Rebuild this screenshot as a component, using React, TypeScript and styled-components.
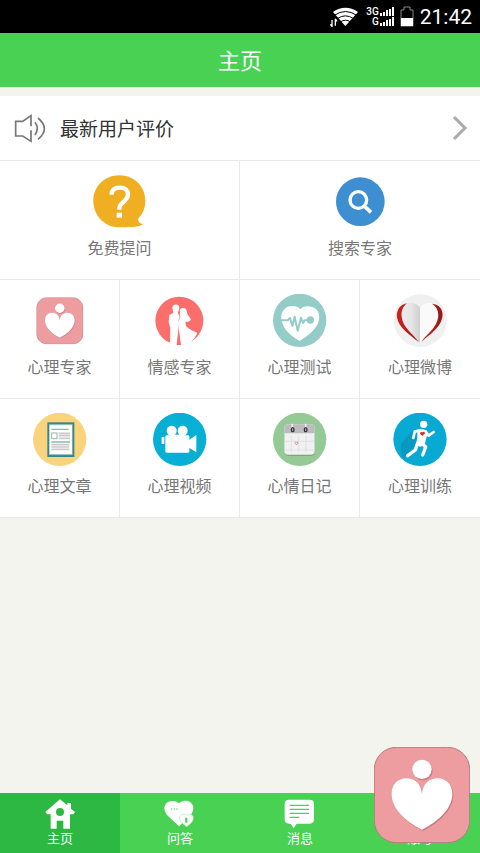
import React from "react";
import styled, { createGlobalStyle } from "styled-components";

const GlobalStyle = createGlobalStyle`
  * { box-sizing: border-box; }
  body {
    margin: 0;
    background: #f4f4ee;
    font-family: Roboto, "Noto Sans CJK SC", sans-serif;
  }
  button { font: inherit; border: 0; padding: 0; cursor: pointer; }
  svg { display: block; flex: none; }
`;

const Page = styled.div`
  min-height: 100vh;
  display: flex;
  flex-direction: column;
`;

const StatusBar = styled.div`
  height: 33px;
  padding: 0 8px;
  display: flex;
  align-items: center;
  justify-content: flex-end;
  gap: 6px;
  background: #000;
  color: #fff;
`;

const SignalGroup = styled.div`
  display: flex;
  flex-direction: column;
`;

const SignalLine = styled.div`
  display: flex;
  align-items: center;
  justify-content: flex-end;
  gap: 1px;
  height: 10px;
  font-size: 10px;
  line-height: 10px;
  font-weight: 500;
`;

const Clock = styled.time`
  padding-top: 2px;
  font-size: 21px;
  line-height: 31px;
`;

const Header = styled.header`
  height: 54px;
  padding-top: 3px;
  display: flex;
  align-items: center;
  justify-content: center;
  background: #49d154;
  color: #fff;
`;

const Title = styled.h1`
  margin: 0;
  font-size: 22px;
  line-height: 32px;
  font-weight: 400;
`;

const Main = styled.main`
  flex: 1;
  padding-top: 9px;
`;

const ReviewRow = styled.button`
  width: 100%;
  height: 65px;
  padding: 0 12px 0 14px;
  display: flex;
  align-items: center;
  gap: 14px;
  background: #fff;
  border-bottom: 1px solid #e9e9e9;
  color: #333;
  text-align: left;
`;

const ReviewText = styled.span`
  flex: 1;
  padding-top: 3px;
  font-size: 19px;
  line-height: 28px;
`;

const Grid = styled.div<{ $columns: number }>`
  display: grid;
  grid-template-columns: repeat(${(p) => p.$columns}, 1fr);
`;

const Cell = styled.button`
  height: 119px;
  padding-top: 14px;
  display: flex;
  flex-direction: column;
  align-items: center;
  gap: 8px;
  background: #fff;
  border-right: 1px solid #e9e9e9;
  border-bottom: 1px solid #e9e9e9;
  color: #777;
  font-size: 16px;
  line-height: 24px;

  ${Grid} > &:last-child {
    border-right: 0;
  }
`;

const TabBar = styled.nav`
  position: sticky;
  bottom: 0;
  display: grid;
  grid-template-columns: repeat(4, 1fr);
  background: #49d154;
`;

const Tab = styled.button<{ $active?: boolean }>`
  height: 60px;
  padding-top: 5px;
  display: flex;
  flex-direction: column;
  align-items: center;
  gap: 1px;
  background: ${(p) => (p.$active ? "#2db843" : "transparent")};
  color: #fff;
  font-size: 13px;
  line-height: 16px;
`;

const FloatingButton = styled.button`
  position: fixed;
  right: 10px;
  bottom: 10px;
  background: none;
  border-radius: 24px;
`;

const CellSvg = ({ box, children }: { box: string; children: React.ReactNode }) => (
  <svg width="54" height="54" viewBox={`${box} 162 162`} aria-hidden="true">
    {children}
  </svg>
);

const TabSvg = ({ box, children }: { box: string; children: React.ReactNode }) => (
  <svg width="32" height="32" viewBox={`${box} 96 96`} fill="#fff" aria-hidden="true">
    {children}
  </svg>
);

const LogoShape = () => (
  <>
    <rect x="1" y="1" width="286" height="286" rx="66" fill="#ed9ca0" stroke="#b77b80" strokeWidth="3" />
    <g fill="#c87c82" transform="translate(3 4)">
      <circle cx="144" cy="67" r="29" />
      <path d="M144 143C143 110 121 94 97 94C71 94 53 113 53 141C53 183 91 222 144 248C196 222 235 183 235 141C235 113 216 94 191 94C167 94 145 110 144 143Z" />
    </g>
    <g fill="#fff">
      <circle cx="144" cy="67" r="29" />
      <path d="M144 143C143 110 121 94 97 94C71 94 53 113 53 141C53 183 91 222 144 248C196 222 235 183 235 141C235 113 216 94 191 94C167 94 145 110 144 143Z" />
    </g>
  </>
);

const QuestionIcon = () => (
  <CellSvg box="38 29">
    <path d="M117 30C161 30 195 63 195 107C195 130 186 148 173 160C173 169 178 174 188 177C177 184 160 186 145 184C136 186 127 186 117 186C73 186 39 151 39 107C39 63 73 30 117 30Z" fill="#f0af22" />
    <path d="M94 88C94 73 104 67 119 67C134 67 143 75 143 87C143 98 137 103 129 110C119 118 117 122 117 133" fill="none" stroke="#fff" strokeWidth="13" />
    <rect x="109" y="142" width="16" height="15" fill="#fff" />
  </CellSvg>
);

const SearchIcon = () => (
  <CellSvg box="39 29">
    <circle cx="121" cy="109" r="73" fill="#3d8fd1" />
    <circle cx="115" cy="104" r="25" fill="none" stroke="#fff" strokeWidth="10" />
    <path d="M134 123L153 141" stroke="#fff" strokeWidth="11" />
  </CellSvg>
);

const ExpertIcon = () => (
  <CellSvg box="98 41">
    <svg x="108" y="51" width="141" height="141" viewBox="0 0 288 288">
      <LogoShape />
    </svg>
  </CellSvg>
);

const CoupleIcon = () => (
  <CellSvg box="98 41">
    <circle cx="177" cy="121" r="72" fill="#fb6e6b" />
    <g fill="#fff">
      <path d="M156 82C157 73 167 70 174 75C178 79 177 87 174 93L173 98L178 110L177 127L173 144L172 194L149 190L150 142L145 126L147 104L159 98Z" />
      <path d="M179 95C176 87 182 82 190 83C198 84 200 92 201 101C205 108 211 113 212 119L204 124L195 124L197 137C207 147 218 152 231 157C225 171 218 182 205 189L184 193L173 192L174 145L174 124L177 107Z" />
    </g>
    <path d="M176 97L179 111L174 121" stroke="#fb6e6b" strokeWidth="2" fill="none" />
    <path d="M175 142L169 194L182 194Z" fill="#fb6e6b" />
  </CellSvg>
);

const PulseIcon = () => (
  <CellSvg box="98 41">
    <circle cx="178" cy="120" r="80" fill="#94ccc8" />
    <path d="M180 87C171 75 152 75 139 81C126 89 120 104 124 121C130 149 152 166 178 182C205 165 230 146 236 119C240 99 231 85 216 80C201 76 187 77 180 87Z" fill="#fff" />
    <path d="M121 120H142L149 113L156 137L163 109L172 151L182 112L188 128L193 120H210" fill="none" stroke="#94ccc8" strokeWidth="6" strokeLinejoin="round" />
    <circle cx="210" cy="119" r="11" fill="#94ccc8" />
  </CellSvg>
);

const PaperHeartIcon = () => (
  <CellSvg box="99 41">
    <defs>
      <linearGradient id="fold" x1="0" x2="1">
        <stop offset="0" stopColor="#eee" />
        <stop offset="0.6" stopColor="#e5e5e5" />
        <stop offset="1" stopColor="#cfcfcf" />
      </linearGradient>
      <linearGradient id="ribbon" x1="0" x2="1">
        <stop offset="0" stopColor="#d2221c" />
        <stop offset="1" stopColor="#901916" />
      </linearGradient>
    </defs>
    <circle cx="181" cy="121" r="79" fill="#f0f0f0" />
    <path d="M180 188V82C170 66 147 66 134 72C118 81 112 96 116 112C124 142 153 163 180 188Z" fill="url(#fold)" />
    <path d="M180 188V82C190 66 213 66 226 72C242 81 247 96 244 112C236 144 207 164 180 188Z" fill="#fafafa" />
    <path d="M141 69C119 72 108 92 111 112C117 143 151 164 176 185C157 159 128 140 125 110C123 93 128 79 141 69Z" fill="url(#ribbon)" />
    <path d="M216 70C240 72 251 90 247 111C241 145 207 163 184 185C199 161 229 145 234 113C237 96 231 79 216 70Z" fill="url(#ribbon)" />
  </CellSvg>
);

const ArticleIcon = () => (
  <CellSvg box="98 40">
    <circle cx="178" cy="119" r="80" fill="#fad47d" />
    <rect x="144" y="71" width="75" height="98" fill="#fff" stroke="#36858a" strokeWidth="6" />
    <path d="M147 75H216M147 165H216" stroke="#7fb8b8" strokeWidth="3" />
    <path d="M153 89H205M153 127H209" stroke="#8db9ad" strokeWidth="4" />
    <rect x="154" y="100" width="16" height="17" fill="#fff" stroke="#8db9ad" strokeWidth="3" />
    <path d="M175 101H209M175 108H209M175 116H209M153 135H207M153 142H207M153 149H207" stroke="#cdc9cb" strokeWidth="5" />
  </CellSvg>
);

const VideoIcon = () => (
  <CellSvg box="458 40">
    <circle cx="538" cy="119" r="80" fill="#06afd3" />
    <g fill="#fff">
      <circle cx="514" cy="93" r="15" />
      <circle cx="547" cy="93" r="15" />
      <rect x="495" y="107" width="72" height="52" rx="4" />
      <path d="M484 112H492V133H484ZM566 121L588 106V158L566 144Z" />
      <path d="M510 105H550V111H510Z" />
    </g>
  </CellSvg>
);

const CalendarIcon = () => (
  <CellSvg box="98 40">
    <circle cx="178" cy="119" r="80" fill="#95ca96" />
    <rect x="133" y="77" width="90" height="91" rx="11" fill="#6f9d75" />
    <rect x="132" y="74" width="91" height="91" rx="11" fill="#f1f1f1" />
    <path d="M132 101V85Q132 74 143 74H212Q223 74 223 85V101Z" fill="#bdbbc0" />
    <path d="M133 125H222M133 151H222M153 108V158M175 108V158M197 108V158" stroke="#d9d9d9" strokeWidth="2" />
    <path d="M156 72V86M196 72V86" stroke="#f7f7f7" strokeWidth="4" />
    <g fill="#aaa" stroke="#38373d" strokeWidth="4">
      <ellipse cx="157" cy="90" rx="4" ry="6" />
      <ellipse cx="196" cy="90" rx="4" ry="6" />
    </g>
    <path d="M168 135L164 131Q164 126 168 128Q173 125 173 131Z" fill="none" stroke="#e88a87" strokeWidth="3" />
  </CellSvg>
);

const RunnerIcon = () => (
  <CellSvg box="459 40">
    <circle cx="540" cy="119" r="80" fill="#08a9d3" />
    <path d="M518 93L484 131Q478 155 490 176L500 165L526 137L530 98Z" fill="#0799c1" />
    <circle cx="551" cy="74" r="11" fill="#fff" />
    <g fill="none" stroke="#fff" strokeLinecap="round" strokeLinejoin="round">
      <path d="M540 92L524 96L520 115M557 96L566 108L581 97" strokeWidth="8" />
      <path d="M532 133L526 151L503 168M545 130L557 142L548 166" strokeWidth="10" />
    </g>
    <path d="M532 90Q547 86 561 93L561 108L554 134L541 141L527 136L532 116Z" fill="#fff" />
    <path d="M547 109L540 102Q540 94 547 98Q554 94 555 101Z" fill="#df2d2d" />
  </CellSvg>
);

const HomeIcon = () => (
  <TabSvg box="132 40">
    <path fillRule="evenodd" d="M180 44L202 62V55H213V72L225 82L220 89H210V132H190V108H170V132H152V89H141L136 82ZM180 70A12 12 0 1 0 180 94A12 12 0 1 0 180 70Z" />
    <path d="M170 99H190V105H170Z" />
  </TabSvg>
);

const AnswerIcon = () => (
  <TabSvg box="493 39">
    <path d="M538 55C528 45 509 46 500 55C490 66 494 80 504 92L538 124L572 91C583 78 584 63 574 53C563 45 547 46 538 55Z" />
    <g fill="#49d154">
      <circle cx="516" cy="72" r="2" />
      <circle cx="524" cy="72" r="2" />
      <circle cx="532" cy="72" r="2" />
    </g>
    <path d="M561 91C551 84 540 88 540 99C540 110 551 117 561 125C571 117 581 110 581 99C581 88 570 84 561 91Z" stroke="#a6e8aa" strokeWidth="2" />
    <path d="M555 101L559 98H563V113H557V103Z" fill="#49d154" />
  </TabSvg>
);

const MessageIcon = () => (
  <TabSvg box="132 189">
    <path d="M147 194H209Q222 194 222 207V253Q222 266 209 266H170L161 280L152 266H147Q134 266 134 253V207Q134 194 147 194Z" />
    <path d="M149 211H207M149 223H207M149 235H207M149 247H178" stroke="#49d154" strokeWidth="4" />
  </TabSvg>
);

const AccountIcon = () => (
  <TabSvg box="0 0">
    <circle cx="48" cy="27" r="21" />
    <path d="M10 91V76Q10 54 33 54H63Q86 54 86 76V91Z" />
  </TabSvg>
);

const SpeakerIcon = () => (
  <svg width="32" height="32" viewBox="42 96 96 96" fill="none" stroke="#777" strokeWidth="5" aria-hidden="true">
    <path d="M93 151V184L68 168H47V124H68L93 107V139" />
    <path d="M105 127Q119 145 105 165M114 114Q152 146 114 178" />
  </svg>
);

const ChevronIcon = () => (
  <svg width="16" height="26" viewBox="0 0 16 26" fill="none" stroke="#aaa" strokeWidth="3" aria-hidden="true">
    <path d="M2 2L13 13L2 24" />
  </svg>
);

const WifiIcon = () => (
  <svg width="30" height="20" viewBox="27 22 90 60" aria-hidden="true">
    <path d="M36 37Q73 12 111 37L73 79Z" fill="#fff" />
    <path d="M40 47Q73 24 107 47M49 57Q73 40 98 57M58 67Q73 56 89 67" fill="none" stroke="#000" strokeWidth="3" />
    <path d="M27 54H51V82H27Z" fill="#000" />
    <path d="M33 82V61M28 74L33 80M43 57V78M43 58L48 65" stroke="#fff" strokeWidth="4" fill="none" />
  </svg>
);

const SignalBars = () => (
  <svg width="14" height="9" viewBox="0 0 14 9" fill="#fff" aria-hidden="true">
    <path d="M0 6H2V9H0ZM3 5H5V9H3ZM6 3H8V9H6ZM9 2H11V9H9ZM12 0H14V9H12Z" />
  </svg>
);

const BatteryIcon = () => (
  <svg width="14" height="21" viewBox="0 0 14 21" aria-hidden="true">
    <path d="M1 20V4H4V1H10V4H13V20Z" fill="none" stroke="#888" />
    <path d="M1 12H13V20H1Z" fill="#fff" />
  </svg>
);

const primaryItems = [
  { label: "免费提问", Icon: QuestionIcon },
  { label: "搜索专家", Icon: SearchIcon },
];

const serviceRows = [
  [
    { label: "心理专家", Icon: ExpertIcon },
    { label: "情感专家", Icon: CoupleIcon },
    { label: "心理测试", Icon: PulseIcon },
    { label: "心理微博", Icon: PaperHeartIcon },
  ],
  [
    { label: "心理文章", Icon: ArticleIcon },
    { label: "心理视频", Icon: VideoIcon },
    { label: "心情日记", Icon: CalendarIcon },
    { label: "心理训练", Icon: RunnerIcon },
  ],
];

const tabs = [
  { label: "主页", Icon: HomeIcon },
  { label: "问答", Icon: AnswerIcon },
  { label: "消息", Icon: MessageIcon },
  { label: "账号", Icon: AccountIcon },
];

export default function App() {
  return (
    <Page lang="zh-CN">
      <GlobalStyle />
      <StatusBar>
        <WifiIcon />
        <SignalGroup>
          <SignalLine>3G<SignalBars /></SignalLine>
          <SignalLine>G<SignalBars /></SignalLine>
        </SignalGroup>
        <BatteryIcon />
        <Clock>21:42</Clock>
      </StatusBar>
      <Header>
        <Title>主页</Title>
      </Header>
      <Main>
        <ReviewRow type="button">
          <SpeakerIcon />
          <ReviewText>最新用户评价</ReviewText>
          <ChevronIcon />
        </ReviewRow>
        {[primaryItems, ...serviceRows].map((items) => (
          <Grid key={items[0].label} $columns={items.length}>
            {items.map(({ label, Icon }) => (
              <Cell key={label} type="button">
                <Icon />
                {label}
              </Cell>
            ))}
          </Grid>
        ))}
      </Main>
      <TabBar>
        {tabs.map(({ label, Icon }, index) => (
          <Tab key={label} type="button" $active={index === 0} aria-current={index === 0 ? "page" : undefined}>
            <Icon />
            {label}
          </Tab>
        ))}
      </TabBar>
      <FloatingButton type="button" aria-label="心理专家">
        <svg width="96" height="96" viewBox="0 0 288 288" aria-hidden="true">
          <LogoShape />
        </svg>
      </FloatingButton>
    </Page>
  );
}
